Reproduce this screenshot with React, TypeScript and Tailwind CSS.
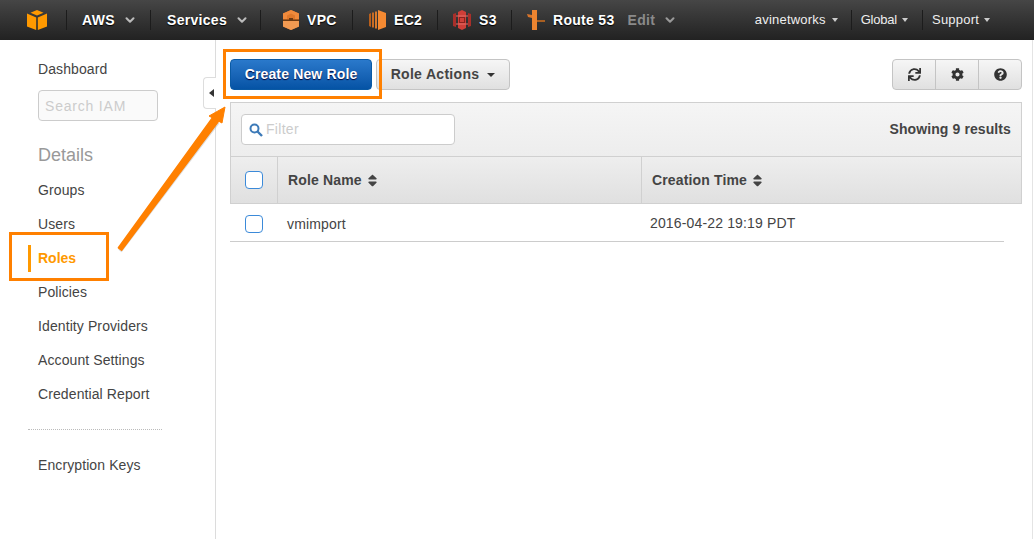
import { ChevronDown } from "lucide-react";
import { FaSync, FaCog, FaQuestionCircle, FaSort } from "react-icons/fa";

const CubeLogo = () => (
  <svg width="20" height="20" viewBox="0 0 20 20">
    <path d="M10 0 L16.5 2.8 L10 5.6 L3.5 2.8 Z" fill="#f90" />
    <path d="M0 3.6 L9.2 7.4 V20 L0 16.4 Z" fill="#f90" />
    <path d="M20 3.6 L10.8 7.4 V20 L20 16.4 Z" fill="#f90" />
  </svg>
);

const VpcIcon = () => (
  <svg width="18" height="20" viewBox="0 0 18 20">
    <path d="M9 0 L17 3.5 V16.5 L9 20 L1 16.5 V3.5 Z" fill="#e0782a" />
    <path d="M9 0 L17 3.5 V9 H13 V5.5 L9 3.5 L5 5.5 V9 H1 V3.5 Z" fill="#f08a3c" />
    <path d="M1 9.5 H7 V8 H11 V9.5 H17 V11 H1 Z" fill="#6e3a12" />
    <path d="M1 11 H17 V16.5 L9 20 L1 16.5 Z" fill="#f29a52" />
  </svg>
);

const Ec2Icon = () => (
  <svg width="18" height="20" viewBox="0 0 18 20">
    <path d="M0 4 L2 3 V17 L0 16 Z" fill="#b85f1c" />
    <rect x="3" y="2.5" width="2" height="15" fill="#c96c24" />
    <rect x="6" y="1.5" width="2" height="17" fill="#d87a2c" />
    <path d="M9 0 L17 3 V17 L9 20 Z" fill="#f58a32" />
  </svg>
);

const S3Icon = () => (
  <svg width="18" height="20" viewBox="0 0 18 20">
    <path d="M0 4 L3 3 V17 L0 16 Z" fill="#a92f2a" />
    <path d="M15 3 L18 4 V16 L15 17 Z" fill="#a92f2a" />
    <path d="M9 0 L13 2 V18 L9 20 L5 18 V2 Z" fill="#cf3f38" />
    <rect x="6.5" y="7.5" width="5" height="5" fill="none" stroke="#8c231e" strokeWidth="1" />
    <path d="M3 6 L15 6 M3 14 L15 14" stroke="#e56f68" strokeWidth="1" />
  </svg>
);

const RouteIcon = () => (
  <svg width="18" height="20" viewBox="0 0 18 20">
    <rect x="5" y="0" width="5" height="20" fill="#ec8430" />
    <path d="M0 4 L5 5 V8 L1 7 Z" fill="#d8742a" />
    <rect x="10" y="10" width="8" height="2" fill="#a85f22" />
  </svg>
);

const Sep = () => <div className="h-[20px] w-px bg-[#1c1c1c]" />;

const TopItem = ({ w, pl, gap, icon, label, chevron }: { w: string; pl: string; gap?: string; icon?: React.ReactNode; label: string; chevron?: boolean }) => (
  <div className={`flex items-center ${w} ${pl} ${gap ?? "gap-[7px]"}`}>
    {icon}
    <span className="font-bold tracking-[0.3px] [text-shadow:0_1px_1px_#000]">{label}</span>
    {chevron && <ChevronDown size={14} strokeWidth={3.5} className="ml-[1px] text-[#bbb]" />}
  </div>
);

const Caret = ({ ml }: { ml: string }) => <span className={`${ml} inline-block border-x-[3px] border-t-[4px] border-x-transparent border-t-[#ccc]`} />;

const Checkbox = () => <div className="size-[18px] rounded-[4px] border border-[#3b8ad9] bg-white" />;

const NavLink = ({ label }: { label: string }) => <div className="flex h-[34px] items-center tracking-[0.1px]">{label}</div>;

export default function App() {
  return (
    <div className="relative h-[539px] w-[1034px] overflow-hidden bg-white font-['Liberation_Sans',Arial,sans-serif] text-[14px] text-[#444]">
      <header className="flex h-[40px] items-center bg-gradient-to-b from-[#464646] to-[#222] text-white">
        <div className="flex w-[66px] justify-end pr-[19px]">
          <CubeLogo />
        </div>
        <Sep />
        <TopItem w="w-[83px]" pl="pl-[15px]" label="AWS" chevron />
        <Sep />
        <TopItem w="w-[109px]" pl="pl-[16px]" label="Services" chevron />
        <Sep />
        <TopItem w="w-[91px]" pl="pl-[21px]" icon={<VpcIcon />} label="VPC" />
        <Sep />
        <TopItem w="w-[84px]" pl="pl-[16px]" icon={<Ec2Icon />} label="EC2" />
        <Sep />
        <TopItem w="w-[73px]" pl="pl-[15px]" gap="gap-[8px]" icon={<S3Icon />} label="S3" />
        <Sep />
        <div className="ml-[15px] flex items-center gap-[8px]">
          <RouteIcon />
          <span className="font-bold tracking-[0.3px] [text-shadow:0_1px_1px_#000]">Route 53</span>
          <span className="ml-[5px] font-bold tracking-[0.3px] text-[#8a8a8a]">Edit</span>
          <ChevronDown size={14} strokeWidth={3.5} className="text-[#999]" />
        </div>
        <div className="ml-auto flex items-center pr-[44px] text-[13px] text-[#eee]">
          <span className="tracking-[0.2px]">avinetworks</span>
          <Caret ml="ml-[6px]" />
          <div className="ml-[13px] mr-[9px]"><Sep /></div>
          <span className="tracking-[-0.2px]">Global</span>
          <Caret ml="ml-[5px]" />
          <div className="ml-[14px] mr-[9px]"><Sep /></div>
          <span className="tracking-[0.2px]">Support</span>
          <Caret ml="ml-[5px]" />
        </div>
      </header>

      <div className="flex h-[499px]">
        <aside className="w-[216px] shrink-0 border-r border-[#dcdcdc] pl-[38px] pt-[12px]">
          <NavLink label="Dashboard" />
          <input
            placeholder="Search IAM"
            className="mt-[4px] block h-[31px] w-[120px] rounded-[4px] border border-[#ccc] bg-[#fafafa] px-[6px] text-[14px] tracking-[0.8px] outline-none placeholder:text-[#ccc]"
          />
          <div className="mt-[22px] text-[18px] leading-[24px] text-[#999]">Details</div>
          <div className="mt-[6px]">
            <NavLink label="Groups" />
            <NavLink label="Users" />
            <div className="relative flex h-[34px] items-center font-bold text-[#f90]">
              <div className="absolute left-[-10px] top-[4px] h-[27px] w-[3px] bg-[#f90]" />
              Roles
            </div>
            <NavLink label="Policies" />
            <NavLink label="Identity Providers" />
            <NavLink label="Account Settings" />
            <NavLink label="Credential Report" />
          </div>
          <div className="ml-[-10px] mt-[18px] w-[134px] border-t border-dotted border-[#bbb]" />
          <div className="mt-[18px]">
            <NavLink label="Encryption Keys" />
          </div>
        </aside>

        <main className="w-[806px] pl-[14px] pt-[19px]">
          <div className="flex h-[31px]">
            <button className="w-[142px] rounded-[4px] border border-[#0a5aa5] bg-gradient-to-b from-[#2a79cb] to-[#0553a5] font-bold tracking-[0.15px] text-white [text-shadow:0_1px_1px_#003]">
              Create New Role
            </button>
            <button className="ml-[4px] flex w-[134px] items-center justify-center rounded-[4px] border border-[#c4c4c4] bg-gradient-to-b from-[#f6f6f6] to-[#e0e0e0] font-bold tracking-[0.3px]">
              Role Actions
              <span className="ml-[8px] inline-block border-x-[4px] border-t-[4px] border-x-transparent border-t-[#333]" />
            </button>
            <div className="ml-auto flex w-[130px] rounded-[4px] border border-[#c4c4c4] bg-gradient-to-b from-[#f6f6f6] to-[#e0e0e0] text-[#333]">
              <div className="flex flex-1 items-center justify-center border-r border-[#c4c4c4]">
                <FaSync size={13} />
              </div>
              <div className="flex flex-1 items-center justify-center border-r border-[#c4c4c4]">
                <FaCog size={13} />
              </div>
              <div className="flex flex-1 items-center justify-center">
                <FaQuestionCircle size={13} />
              </div>
            </div>
          </div>

          <section className="mt-[12px] w-[792px] border border-[#d0d0d0]">
            <div className="flex h-[54px] items-center justify-between border-b border-[#d0d0d0] bg-gradient-to-b from-[#f5f5f5] to-[#ededed] pl-[10px] pr-[10px]">
              <div className="flex h-[31px] w-[214px] items-center rounded-[4px] border border-[#ccc] bg-white pl-[7px] tracking-[0.3px] text-[#ccc]">
                <svg width="14" height="14" viewBox="0 0 14 14" className="mr-[3px]">
                  <circle cx="5.5" cy="5.5" r="4" fill="none" stroke="#3d7ab8" strokeWidth="2" />
                  <path d="M8.5 8.5 L13 13" stroke="#3d7ab8" strokeWidth="2.4" />
                </svg>
                Filter
              </div>
              <span className="font-bold tracking-[0.1px]">Showing 9 results</span>
            </div>
            <div className="flex h-[46px] items-center bg-gradient-to-b from-[#eee] to-[#e0e0e0] font-bold tracking-[0.15px]">
              <div className="flex h-full w-[47px] items-center justify-center border-r border-[#d0d0d0]">
                <Checkbox />
              </div>
              <div className="flex h-full w-[364px] items-center gap-[3px] border-r border-[#d0d0d0] pl-[10px]">
                Role Name <FaSort size={15} />
              </div>
              <div className="flex items-center gap-[3px] pl-[10px]">
                Creation Time <FaSort size={15} />
              </div>
            </div>
          </section>
          <div className="flex h-[38px] w-[774px] items-center border-b border-[#ccc] pt-[2px] tracking-[0.15px]">
            <div className="flex w-[47px] justify-center">
              <Checkbox />
            </div>
            <div className="w-[373px] pl-[10px] pt-[1px]">vmimport</div>
            <div>2016-04-22 19:19 PDT</div>
          </div>
        </main>
      </div>

      {/* sidebar collapse tab */}
      <div className="absolute left-[203px] top-[77px] flex h-[32px] w-[13px] items-center justify-center rounded-l-[4px] border border-r-0 border-[#ddd] bg-white pl-[2px]">
        <span className="inline-block border-y-[4px] border-r-[5px] border-y-transparent border-r-[#333]" />
      </div>

      {/* orange callouts */}
      <div className="absolute left-[223px] top-[49px] h-[50px] w-[159px] border-[3px] border-[#ff8000]" />
      <div className="absolute left-[9px] top-[232px] h-[49px] w-[100px] border-[3px] border-[#ff8000]" />
      <svg className="absolute left-[110px] top-[100px]" width="120" height="160" viewBox="0 0 120 160">
        <path d="M8.4 149.8 L11.6 152.2 L109.3 23.6 L103.7 19.4 Z" fill="#999" opacity="0.35" />
        <path d="M8.4 147.8 L11.6 150.2 L108.3 21.6 L102.7 17.4 Z" fill="#ff8000" stroke="#ff8000" strokeWidth="1.5" strokeLinejoin="round" />
        <path d="M115 7 L112 23 L99 16 Z" fill="#ff8000" stroke="#ff8000" strokeWidth="1" strokeLinejoin="round" />
      </svg>

      <div className="absolute right-[1px] top-[40px] h-[499px] w-px bg-[#e4e4e4]" />
    </div>
  );
}
